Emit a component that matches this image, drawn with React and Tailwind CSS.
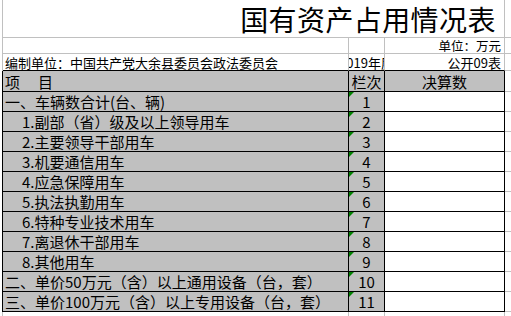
import React from "react";

const rows = [
  { label: "一、车辆数合计(台、辆)", no: "1", sub: false },
  { label: "1.副部（省）级及以上领导用车", no: "2", sub: true },
  { label: "2.主要领导干部用车", no: "3", sub: true },
  { label: "3.机要通信用车", no: "4", sub: true },
  { label: "4.应急保障用车", no: "5", sub: true },
  { label: "5.执法执勤用车", no: "6", sub: true },
  { label: "6.特种专业技术用车", no: "7", sub: true },
  { label: "7.离退休干部用车", no: "8", sub: true },
  { label: "8.其他用车", no: "9", sub: true },
  { label: "二、单价50万元（含）以上通用设备（台，套）", no: "10", sub: false },
  { label: "三、单价100万元（含）以上专用设备（台，套）", no: "11", sub: false },
];

const Flag = () => (
  <svg className="absolute top-0 left-0" width="5" height="5" viewBox="0 0 5 5">
    <polygon points="0,0 5,0 0,5" fill="#008000" />
  </svg>
);

const App = () => {
  return (
    <div className="w-[511px] h-[316px] overflow-hidden bg-white text-black font-['Noto_Sans_CJK_SC',sans-serif]">
      {/* title */}
      <div className="flex h-[38px]">
        <div className="w-[3px] border-r border-[#c0c0c0]" />
        <div className="w-[502px] border-r border-b border-[#c0c0c0] flex items-end justify-center pb-[2px]">
          <span className="text-[28px] leading-[32px] tracking-[0.4px] pl-[229px]">国有资产占用情况表</span>
        </div>
        <div className="flex-1 border-b border-[#c0c0c0]" />
      </div>

      {/* unit */}
      <div className="flex h-[16px]">
        <div className="w-[3px] border-r border-[#c0c0c0]" />
        <div className="w-[346px] border-r border-b border-[#c0c0c0]" />
        <div className="w-[36px] border-r border-b border-[#c0c0c0]" />
        <div className="w-[120px] border-r border-b border-[#c0c0c0] flex items-end justify-end pr-[3px] text-[12.5px] leading-[14px]">
          单位：万元
        </div>
        <div className="flex-1 border-b border-[#c0c0c0]" />
      </div>

      {/* org */}
      <div className="flex h-[17px]">
        <div className="w-[3px] border-r border-[#c0c0c0]" />
        <div className="w-[346px] border-r border-[#c0c0c0] border-b border-b-black flex items-end pl-[2px] text-[13px] leading-[15px] whitespace-nowrap">
          编制单位：中国共产党大余县委员会政法委员会
        </div>
        <div className="w-[36px] border-r border-[#c0c0c0] border-b border-b-black flex items-end justify-center overflow-hidden text-[13px] leading-[15px] whitespace-nowrap">
          <span className="shrink-0">2019年度</span>
        </div>
        <div className="w-[120px] border-r border-[#c0c0c0] border-b border-b-black flex items-end justify-end pr-[3px] text-[13px] leading-[15px]">
          公开09表
        </div>
        <div className="flex-1 border-b border-[#c0c0c0]" />
      </div>

      {/* header */}
      <div className="flex h-[21px]">
        <div className="w-[3px] border-r border-black" />
        <div className="w-[346px] bg-[#c0c0c0] border-r border-b border-black flex items-end pl-[2px] pb-[1px] text-[15px] leading-[17px]">
          <span>项</span>
          <span className="ml-[18px]">目</span>
        </div>
        <div className="w-[36px] bg-[#c0c0c0] border-r border-b border-black flex items-end justify-center pb-[1px] text-[15px] leading-[17px]">
          栏次
        </div>
        <div className="w-[120px] bg-[#c0c0c0] border-r border-b border-black flex items-end justify-center pb-[1px] text-[15px] leading-[17px]">
          决算数
        </div>
        <div className="flex-1 border-b border-[#c0c0c0]" />
      </div>

      {rows.map((row) => (
        <div key={row.no} className="flex h-[20px]">
          <div className="w-[3px] border-r border-black" />
          <div
            className={`w-[346px] bg-[#c0c0c0] border-r border-b border-black flex items-end pb-[1px] text-[15px] leading-[17px] whitespace-nowrap ${
              row.sub ? "pl-[19px]" : "pl-[2px]"
            }`}
          >
            {row.label}
          </div>
          <div className="relative w-[36px] bg-[#c0c0c0] border-r border-b border-black flex items-end justify-center pb-[1px] text-[15px] leading-[17px]">
            <Flag />
            {row.no}
          </div>
          <div className="w-[120px] bg-white border-r border-b border-black" />
          <div className="flex-1 border-b border-[#c0c0c0]" />
        </div>
      ))}

      {/* empty row below */}
      <div className="flex h-[20px]">
        <div className="w-[3px] border-r border-[#c0c0c0]" />
        <div className="w-[346px] border-r border-[#c0c0c0]" />
        <div className="w-[36px] border-r border-[#c0c0c0]" />
        <div className="w-[120px] border-r border-[#c0c0c0]" />
        <div className="flex-1" />
      </div>
    </div>
  );
};

export default App;
